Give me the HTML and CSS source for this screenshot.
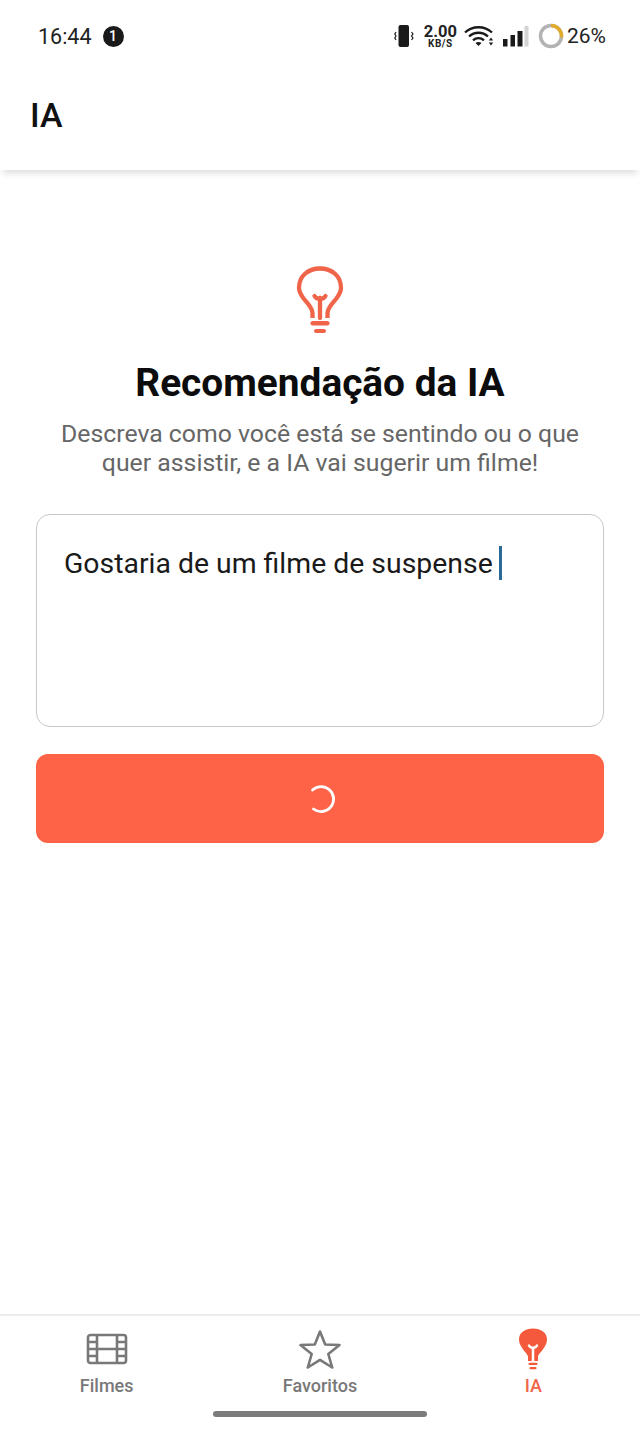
FILE: index.html
```html
<!DOCTYPE html>
<html lang="pt-BR">
<head>
  <meta charset="UTF-8">
  <title>IA</title>
  <link rel="stylesheet" href="styles.css">
</head>
<body>

  <div class="app">
    <div class="status-bar">
      <div class="status-left">
        <span class="clock">16:44</span>
        <span class="notif-badge">1</span>
      </div>
      <div class="status-right">
        <svg class="st-vibrate" width="20" height="24" viewBox="0 0 20 24">
          <rect x="4.500" y="1" width="10.500" height="22" rx="2" fill="#1a1a1a"/>
          <path d="M2 8 L0.800 10 L2 12 L0.800 14 L2 16 M17.500 8 L19 10 L17.500 12 L19 14 L17.500 16" fill="none" stroke="#1a1a1a" stroke-width="1.200"/>
        </svg>
        <div class="net-speed">
          <span class="net-num">2.00</span>
          <span class="net-unit">KB/S</span>
        </div>
        <svg class="st-wifi" width="30" height="20" viewBox="0 0 30 20">
          <path d="M1 6.500 C8.500 -0.500 20.500 -0.500 28 6.500" fill="none" stroke="#1a1a1a" stroke-width="2.300"/>
          <path d="M5 10.500 C10.500 5.500 18.500 5.500 24 10.500" fill="none" stroke="#1a1a1a" stroke-width="2.300"/>
          <path d="M9 14.300 C12 11.500 17 11.500 20 14.300" fill="none" stroke="#1a1a1a" stroke-width="2.300"/>
          <path d="M14.500 20 L11.500 17 C13 15.600 16 15.600 17.500 17 Z" fill="#1a1a1a"/>
          <path d="M27 11.500 L24.800 14.500 H29.200 Z M27 19.500 L24.800 16.500 H29.200 Z" fill="#1a1a1a"/>
        </svg>
        <svg class="st-signal" width="27" height="22" viewBox="0 0 27 22">
          <rect x="1" y="14" width="4.500" height="7.500" fill="#1a1a1a"/>
          <rect x="8.500" y="10" width="4.500" height="11.500" fill="#1a1a1a"/>
          <rect x="15.500" y="6" width="5" height="15.500" fill="#1a1a1a"/>
          <rect x="22.500" y="1" width="4" height="20.500" fill="#d4d4d4"/>
        </svg>
        <svg class="st-battery" width="26" height="26" viewBox="0 0 26 26">
          <circle cx="13" cy="13" r="10.500" fill="none" stroke="#b3b3b3" stroke-width="3.500"/>
          <path d="M13 2.500 A10.500 10.500 0 0 1 23.400 14.500" fill="none" stroke="#e0aa2c" stroke-width="3.500"/>
        </svg>
        <span class="battery-pct">26%</span>
      </div>
    </div>

    <header class="top-bar">
      <span class="top-title">IA</span>
    </header>

    <main class="content">
      <svg class="hero-icon" width="48" height="68" viewBox="0 0 48 68">
        <path d="M16.500 52 V47 C16.500 42 12 38 8 33 C5 29 3 26 3 22 C3 10 12 2.500 24 2.500 C36 2.500 45 10 45 22 C45 26 43 29 40 33 C36 38 31.500 42 31.500 47 V52" fill="none" stroke="#f0654a" stroke-width="4.300"/>
        <path d="M24 52 V33 M18.500 30 C20 32.500 22 33 24 32 C26 33 28 32.500 29.500 30" fill="none" stroke="#f0654a" stroke-width="4.300" stroke-linecap="round"/>
        <rect x="14.500" y="55" width="19" height="4.500" rx="2.200" fill="#f0654a"/>
        <rect x="18" y="63" width="12" height="4" rx="2" fill="#f0654a"/>
      </svg>
      <h1 class="hero-title">Recomendação da IA</h1>
      <p class="hero-sub">Descreva como você está se sentindo ou o que quer assistir, e a IA vai sugerir um filme!</p>

      <div class="prompt-box">
        <span class="prompt-text">Gostaria de um filme de suspense</span><span class="caret"></span>
      </div>

      <div class="send-btn">
        <svg class="spinner" width="32" height="32" viewBox="0 0 32 32">
          <path d="M7.500 7 A12.500 12.500 0 1 1 8.500 26" fill="none" stroke="#fff" stroke-width="2.800" stroke-linecap="round"/>
        </svg>
      </div>
    </main>

    <nav class="tab-bar">
      <div class="tab">
        <div class="tab-icon">
          <svg width="42" height="34" viewBox="0 0 42 34">
            <rect x="2" y="3" width="38" height="28" rx="2.500" fill="none" stroke="#787878" stroke-width="2.600"/>
            <path d="M11 3 V31 M31 3 V31 M11 17 H31 M2 10 H11 M2 17 H11 M2 24 H11 M31 10 H40 M31 17 H40 M31 24 H40" fill="none" stroke="#787878" stroke-width="2.600"/>
          </svg>
        </div>
        <span class="tab-label">Filmes</span>
      </div>
      <div class="tab">
        <div class="tab-icon">
          <svg width="44" height="40" viewBox="0 0 44 40">
            <path d="M22 2.500 L27.200 15.500 L41.500 16 L30.300 25 L34.200 38.500 L22 30.800 L9.800 38.500 L13.700 25 L2.500 16 L16.800 15.500 Z" fill="none" stroke="#787878" stroke-width="2.600" stroke-linejoin="round"/>
          </svg>
        </div>
        <span class="tab-label">Favoritos</span>
      </div>
      <div class="tab active">
        <div class="tab-icon">
          <svg width="30" height="42" viewBox="0 0 30 42">
            <path d="M10 33 V29 C10 26 6.500 24 4.500 20.500 C2 17 1 14 1 11.500 C1 4.500 7 0.500 15 0.500 C23 0.500 29 4.500 29 11.500 C29 14 28 17 25.500 20.500 C23.500 24 20 26 20 29 V33 Z" fill="#f4593b"/>
            <path d="M15 33 V20 M11 17.500 C12 19.500 13.500 20 15 19.500 C16.500 20 18 19.500 19 17.500" fill="none" stroke="#fff" stroke-width="2.500" stroke-linecap="round"/>
            <rect x="10.500" y="34.800" width="9" height="2.300" rx="1.100" fill="#f4593b"/>
            <rect x="11.500" y="39" width="7" height="2.300" rx="1.100" fill="#f4593b"/>
          </svg>
        </div>
        <span class="tab-label">IA</span>
      </div>
      <div class="home-handle"></div>
    </nav>
  </div>

</body>
</html>
```

FILE: styles.css
```css
* {
  box-sizing: border-box;
}

body {
  margin: 0;
  background: #fff;
  font-family: Roboto, "Liberation Sans", sans-serif;
  color: #111;
}

.app {
  width: 640px;
  height: 1430px;
  display: flex;
  flex-direction: column;
  overflow: hidden;
}

.status-bar {
  height: 72px;
  flex: none;
  display: flex;
  justify-content: space-between;
  align-items: center;
  padding: 0 34px 0 38px;
}

.status-left,
.status-right {
  display: flex;
  align-items: center;
}

.clock {
  font-size: 21.5px;
  color: #222;
}

.notif-badge {
  width: 21px;
  height: 21px;
  margin-left: 11px;
  border-radius: 50%;
  background: #1a1a1a;
  color: #fff;
  font-size: 14px;
  font-weight: 500;
  display: flex;
  align-items: center;
  justify-content: center;
}

.status-right svg {
  display: block;
}

.net-speed {
  display: flex;
  flex-direction: column;
  align-items: center;
  margin: 0 7px 0 10px;
  color: #222;
  font-weight: 700;
}

.net-num {
  font-size: 16.5px;
  line-height: 14px;
}

.net-unit {
  font-size: 10px;
  line-height: 9px;
  letter-spacing: 0.5px;
}

.st-signal {
  margin-left: 8px;
}

.st-battery {
  margin-left: 9px;
}

.battery-pct {
  font-size: 21px;
  color: #222;
  margin-left: 3px;
}

.top-bar {
  height: 98px;
  flex: none;
  padding: 0 30px 12px;
  display: flex;
  align-items: center;
  background: #fff;
  box-shadow: 0 6px 7px -3px rgba(0, 0, 0, 0.14);
}

.top-title {
  font-size: 34px;
  font-weight: 500;
  color: #111;
}

.content {
  flex: 1;
  padding: 96px 36px 0;
  display: flex;
  flex-direction: column;
  align-items: center;
}

.hero-icon {
  display: block;
  flex: none;
}

.hero-title {
  margin: 25px 0 0;
  font-size: 38.8px;
  line-height: 48px;
  font-weight: 700;
  color: #0c0c0c;
}

.hero-sub {
  margin: 12px 0 0;
  font-size: 24.8px;
  line-height: 29px;
  width: 540px;
  text-align: center;
  color: #666;
}

.prompt-box {
  width: 100%;
  height: 213px;
  margin-top: 37px;
  padding: 31px 27px;
  border: 1.5px solid #c8c8c8;
  border-radius: 14px;
  display: flex;
  align-items: flex-start;
}

.prompt-text {
  font-size: 28.4px;
  line-height: 36px;
  color: #1a1a1a;
}

.caret {
  width: 3px;
  height: 34px;
  margin-left: 6px;
  background: #2b6a97;
}

.send-btn {
  width: 100%;
  height: 89px;
  margin-top: 27px;
  border-radius: 12px;
  background: #ff6347;
  display: flex;
  align-items: center;
  justify-content: center;
}

.spinner {
  margin-left: 2px;
}

.tab-bar {
  position: relative;
  height: 116px;
  flex: none;
  display: flex;
  border-top: 2px solid #ececec;
  background: #fff;
}

.tab {
  flex: 1;
  padding-top: 11px;
  display: flex;
  flex-direction: column;
  align-items: center;
  gap: 4px;
  color: #787878;
}

.tab-icon {
  height: 44px;
  display: flex;
  align-items: center;
}

.tab-label {
  font-size: 18px;
  line-height: 22px;
  font-weight: 500;
}

.tab.active {
  color: #f0654a;
}

.home-handle {
  position: absolute;
  left: 213px;
  bottom: 13px;
  width: 214px;
  height: 6px;
  border-radius: 3px;
  background: #7c7c7c;
}
```
